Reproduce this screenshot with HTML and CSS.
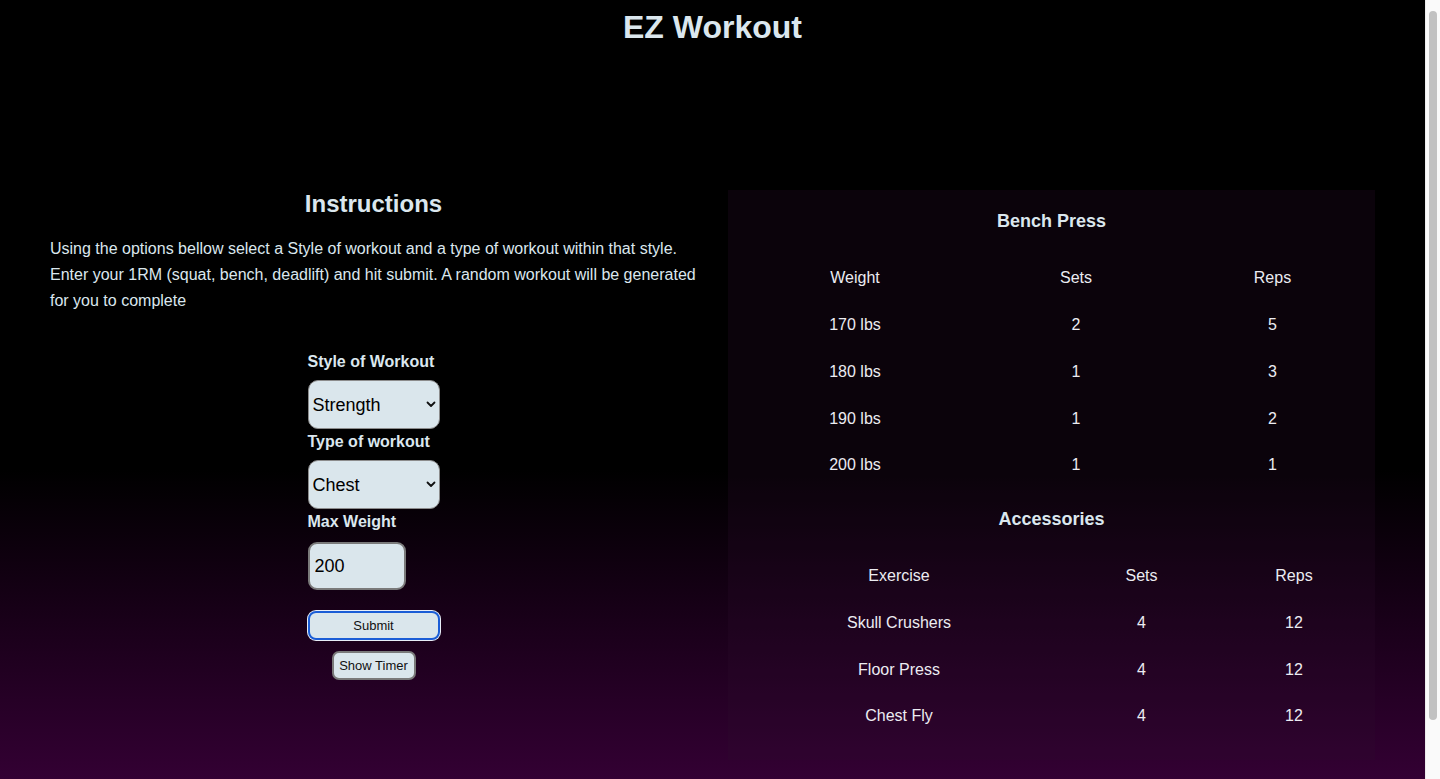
FILE: index.html
```html
<!DOCTYPE html>
<html lang="en">
<head>
<meta charset="utf-8">
<title>EZ Workout</title>
<link rel="stylesheet" href="styles.css">
</head>
<body>
<header class="site-header">
  <h1 class="title">EZ Workout</h1>
</header>
<main class="layout">
  <section class="instructions">
    <h2 class="section-title">Instructions</h2>
    <p class="intro">Using the options bellow select a Style of workout and a type of workout within that style. Enter your 1RM (squat, bench, deadlift) and hit submit. A random workout will be generated for you to complete</p>
    <form class="workout-form">
      <label class="field-label" for="style">Style of Workout</label>
      <div class="select-wrap">
        <select id="style" class="field-select">
          <option>Strength</option>
          <option>Hypertrophy</option>
        </select>
        <svg class="chevron" width="10" height="7" viewBox="0 0 10 7"><path d="M1.5 1.5 L5 5 L8.5 1.5" fill="none" stroke="#111" stroke-width="1.8" stroke-linecap="round" stroke-linejoin="round"/></svg>
      </div>
      <label class="field-label" for="type">Type of workout</label>
      <div class="select-wrap">
        <select id="type" class="field-select">
          <option>Chest</option>
          <option>Back</option>
          <option>Legs</option>
        </select>
        <svg class="chevron" width="10" height="7" viewBox="0 0 10 7"><path d="M1.5 1.5 L5 5 L8.5 1.5" fill="none" stroke="#111" stroke-width="1.8" stroke-linecap="round" stroke-linejoin="round"/></svg>
      </div>
      <label class="field-label" for="max">Max Weight</label>
      <input id="max" class="field-input" type="text" value="200">
      <button type="button" class="btn btn-submit">Submit</button>
    </form>
    <div class="timer-row">
      <button type="button" class="btn btn-timer">Show Timer</button>
    </div>
  </section>
  <section class="results">
    <h3 class="result-title">Bench Press</h3>
    <table class="result-table lift-table">
      <colgroup><col class="c1"><col class="c2"><col class="c3"></colgroup>
      <tr><td>Weight</td><td>Sets</td><td>Reps</td></tr>
      <tr><td>170 lbs</td><td>2</td><td>5</td></tr>
      <tr><td>180 lbs</td><td>1</td><td>3</td></tr>
      <tr><td>190 lbs</td><td>1</td><td>2</td></tr>
      <tr><td>200 lbs</td><td>1</td><td>1</td></tr>
    </table>
    <h3 class="result-title acc-title">Accessories</h3>
    <table class="result-table acc-table">
      <colgroup><col class="c1"><col class="c2"><col class="c3"></colgroup>
      <tr><td>Exercise</td><td>Sets</td><td>Reps</td></tr>
      <tr><td>Skull Crushers</td><td>4</td><td>12</td></tr>
      <tr><td>Floor Press</td><td>4</td><td>12</td></tr>
      <tr><td>Chest Fly</td><td>4</td><td>12</td></tr>
    </table>
  </section>
</main>
<div class="scrollbar" aria-hidden="true"><div class="scrollbar-thumb"></div></div>
</body>
</html>
```
FILE: styles.css
```css
html {
  background: #000;
}
body {
  margin: 0 15px 0 0;
  font-family: "Liberation Sans", Arial, sans-serif;
  color: #dbe7ee;
  background: linear-gradient(to bottom, #000 0px, #000 470px, #330033 779px, #330033 100%);
  min-height: 875px;
}
.site-header {
  padding-top: 9px;
  text-align: center;
}
.title {
  margin: 0;
  font-size: 32px;
  line-height: 37px;
  font-weight: bold;
}
.layout {
  display: grid;
  grid-template-columns: 1fr 1fr;
  column-gap: 31px;
  padding: 0 50px 117px;
  margin-top: 144px;
  align-items: start;
}
.instructions {
  padding-top: 1px;
}
.section-title {
  margin: 0 0 19px;
  text-align: center;
  font-size: 24px;
  line-height: 26px;
}
.intro {
  margin: 0 0 39px;
  font-size: 16px;
  line-height: 26px;
}
.workout-form {
  width: 132px;
  margin: 0 auto;
  display: flex;
  flex-direction: column;
  align-items: flex-start;
}
.field-label {
  font-size: 16px;
  font-weight: bold;
  line-height: 18px;
  margin-bottom: 9px;
}
.select-wrap {
  position: relative;
  width: 132px;
  margin-bottom: 4px;
}
.field-select {
  appearance: none;
  -webkit-appearance: none;
  width: 132px;
  height: 49px;
  box-sizing: border-box;
  padding: 0 0 0 4px;
  border: 1px solid #8c8c8c;
  border-radius: 10px;
  background: #dae6ec;
  font-family: "Liberation Sans", Arial, sans-serif;
  font-size: 18px;
  color: #000;
}
.chevron {
  position: absolute;
  right: 4px;
  top: 21px;
  pointer-events: none;
}
.field-input {
  margin-top: 2px;
  width: 98px;
  height: 48px;
  box-sizing: border-box;
  padding: 0 0 0 5px;
  border: 2px solid #7a7a7a;
  border-radius: 9px;
  background: #dae6ec;
  font-family: "Liberation Sans", Arial, sans-serif;
  font-size: 18px;
  color: #000;
}
.btn {
  height: 29px;
  box-sizing: border-box;
  background: #dae6ec;
  font-family: "Liberation Sans", Arial, sans-serif;
  font-size: 13px;
  color: #111;
  padding: 0;
}
.btn-submit {
  margin-top: 21px;
  width: 132px;
  border: 2px solid #1a5dd6;
  border-radius: 8px;
  box-shadow: 0 0 0 1px #e8eef8;
}
.timer-row {
  display: flex;
  justify-content: center;
  margin-top: 11px;
}
.btn-timer {
  width: 84px;
  border: 2px solid #7a7a7a;
  border-radius: 7px;
}
.results {
  background: rgba(45, 12, 45, 0.24);
  padding: 20px 0 20px;
}
.result-title {
  margin: 0;
  text-align: center;
  font-size: 18px;
  line-height: 22px;
  font-weight: bold;
}
.acc-title {
  margin-top: 19px;
}
.result-table {
  margin: 23px auto 0;
  border-collapse: collapse;
  table-layout: fixed;
  width: 589px;
  font-size: 16px;
  color: #ececf2;
}
.result-table td {
  text-align: center;
  padding: 0;
  height: 46.75px;
  line-height: 18px;
}
.lift-table .c1 { width: 196px; }
.lift-table .c2 { width: 246px; }
.lift-table .c3 { width: 147px; }
.acc-table .c1 { width: 284px; }
.acc-table .c2 { width: 201px; }
.acc-table .c3 { width: 104px; }
.scrollbar {
  position: fixed;
  top: 0;
  right: 0;
  width: 15px;
  height: 100vh;
  background: #fafafa;
  border-left: 1px solid #ececec;
  box-sizing: border-box;
}
.scrollbar-thumb {
  position: absolute;
  top: 11px;
  left: 3px;
  width: 8px;
  height: 709px;
  border-radius: 4px;
  background: #c1c1c1;
}
```
